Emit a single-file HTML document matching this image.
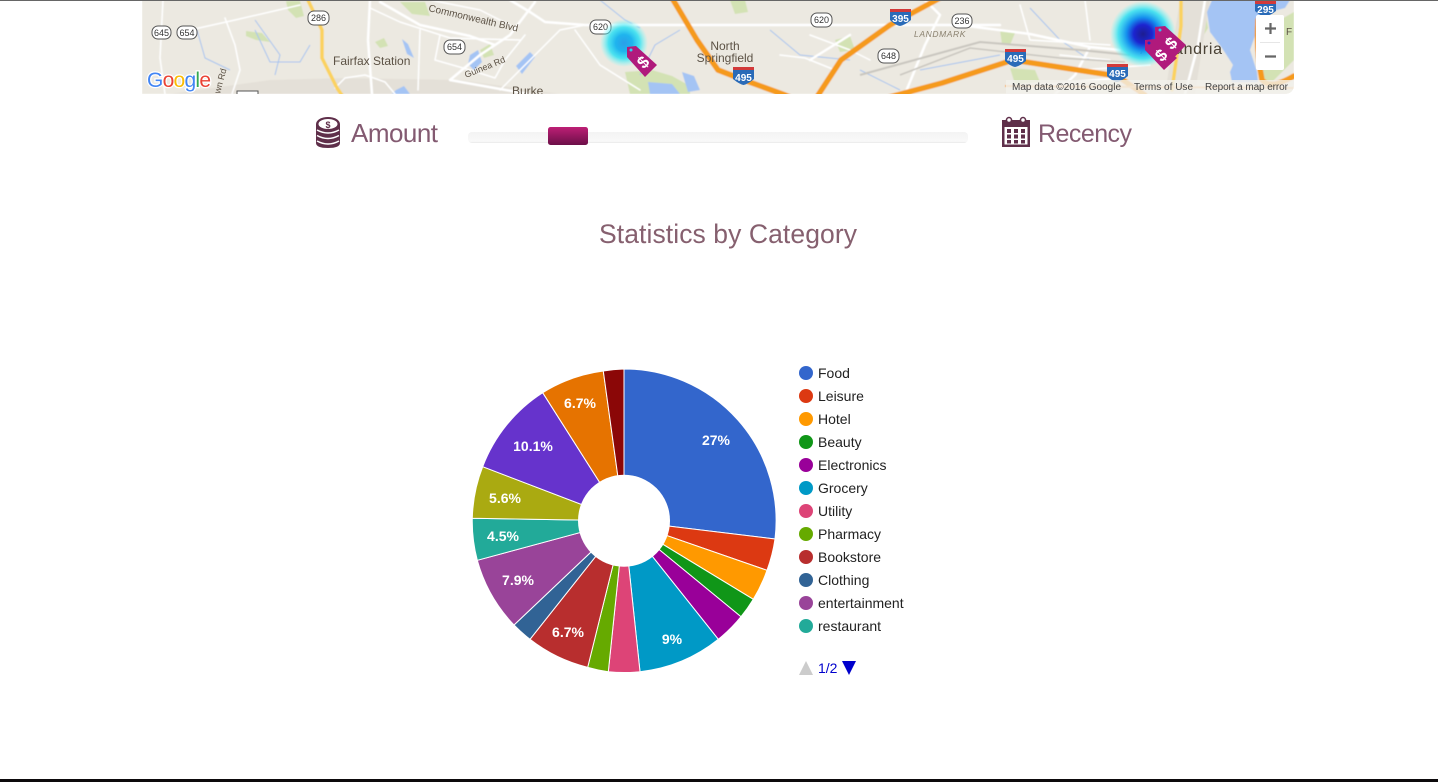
<!DOCTYPE html>
<html><head><meta charset="utf-8"><title>Statistics</title>
<style>
html,body{margin:0;padding:0;background:#fff;width:1438px;height:782px;overflow:hidden}
svg{display:block;font-family:"Liberation Sans",Arial,sans-serif}
.rd{fill:none;stroke:#fff;stroke-width:1.500;stroke-linecap:round;stroke-linejoin:round}
.rm{fill:none;stroke:#fff;stroke-width:2.500;stroke-linecap:round;stroke-linejoin:round}
.hw{fill:none;stroke:#f59a1e;stroke-width:5.500;stroke-linecap:round;stroke-linejoin:round}
.yw{fill:none;stroke:#fbd25e;stroke-width:3.500;stroke-linecap:round;stroke-linejoin:round}
.st{fill:none;stroke:#a5c3ef;stroke-width:1}
.gn{fill:#d3e2b4}
.wt{fill:#a4c4f4}
.sh{fill:#fff;stroke:#555;stroke-width:1}
.sht{font-size:9px;fill:#333;text-anchor:middle}
.bs{font-size:10px;fill:#fff;text-anchor:middle;font-weight:bold}
.lb{fill:#5c5245}
.pl{font-size:14px;font-weight:bold;fill:#fff;text-anchor:middle}
.lg{font-size:14px;fill:#222}
.hd{fill:#835a71}
</style></head><body>
<svg width="1438" height="782" viewBox="0 0 1438 782" xmlns="http://www.w3.org/2000/svg">
<defs>
<clipPath id="mp"><path d="M142 0H1294V84Q1294 94 1284 94H142Z"/></clipPath>
<filter id="sf" x="0" y="0" width="100%" height="100%"><feGaussianBlur stdDeviation="0.4"/></filter>
<radialGradient id="h1"><stop offset="0" stop-color="#2a9fe8"/><stop offset=".35" stop-color="#1fb4ee"/><stop offset=".65" stop-color="#2fe0f2" stop-opacity=".85"/><stop offset="1" stop-color="#6ff" stop-opacity="0"/></radialGradient>
<radialGradient id="h2"><stop offset="0" stop-color="#1d1d90"/><stop offset=".28" stop-color="#1c24d0"/><stop offset=".5" stop-color="#1590ee"/><stop offset=".75" stop-color="#2fe0f2" stop-opacity=".85"/><stop offset="1" stop-color="#6ff" stop-opacity="0"/></radialGradient>
<linearGradient id="hd" x1="0" y1="0" x2="0" y2="1"><stop offset="0" stop-color="#bd1f75"/><stop offset="1" stop-color="#6c0f48"/></linearGradient>
<linearGradient id="tr" x1="0" y1="0" x2="0" y2="1"><stop offset="0" stop-color="#f3f3f3"/><stop offset=".85" stop-color="#f9f9f9"/><stop offset="1" stop-color="#e8e8e8"/></linearGradient>
</defs>
<rect width="1438" height="782" fill="#fff"/>
<g clip-path="url(#mp)">
<g filter="url(#sf)">
<rect x="142" y="0" width="1152" height="94" fill="#ece9e1"/>
<path class="gn" d="M286 1H300L304 16L296 18L288 10Z M246 31L262 33L270 42L256 40L246 36Z M375 42L384 38L388 46L380 48Z M400 2H425L430 16L412 14Z M652 70L672 76L690 86L690 94H630L625 72Z M730 0H745L748 12L735 14Z M480 50L490 44L494 55L484 58Z M835 40L850 36L855 50L840 52Z M1000 30L1015 33L1010 45L1002 44Z M1010 68L1035 70L1040 82L1015 84Z M1190 15L1205 8L1208 28L1198 45Z M1262 30L1294 12V60L1272 82H1262Z"/>
<path d="M170 94L270 80L345 78L460 80L560 94Z" fill="#e4e0d8"/>
<path d="M1180 0H1210L1205 30L1195 94H1165Z" fill="#e4e0d8"/>
<path class="wt" d="M1212 0H1290L1285 8L1262 14L1257 30L1250 50L1257 72L1258 82L1232 82L1230 72L1233 65L1222 48L1210 32L1207 12Z"/>
<path class="wt" d="M402 39L408 44L414 58L407 54Z M470 55L478 50L482 62L474 70L468 64Z M530 52L535 57L522 74L516 66Z M396 90L404 86L410 94H392Z M648 82L672 84L680 94H650Z M682 72L694 76L700 90L688 92Z"/>
<path class="st" d="M255 20L280 55L275 75M197 30L205 58L230 70M255 30L270 62L300 62L310 45M600 0L625 20L640 28M680 30L655 45L640 75M770 30L800 55L850 60M1030 8L1060 40L1090 60M860 70L900 90M920 70L1000 55"/>
<path class="rd" d="M163 0L160 58L165 94M190 30L235 20L300 5M225 18L235 45L240 70L232 94M335 88L345 78L365 75L385 82L395 94M370 8L400 22L450 38L520 40M420 30L418 90M440 35L435 60L470 70L495 78L505 60L525 35M510 25L480 10L430 0M500 90L560 30L585 25M575 30L600 65L640 90M1085 0L1090 40M1020 5L1030 40L1110 45M870 60L850 50L810 35M780 55L805 58L835 70M1060 55L1110 60M1080 70L1150 65"/>
<path class="rm" d="M585 25H1000M960 25L1030 34L1090 47L1120 50M370 0L368 40L372 94M380 2L420 25L470 36L495 45M510 0L530 12L545 22L585 25M535 2L510 35L480 55L450 80L528 94M925 0L940 15L925 45L905 94M1090 47L1075 75L1055 94M1205 0L1198 45L1185 94M850 35L810 60M1040 85L1120 78"/>
<path d="M860 75L980 42L1080 50L1130 55" fill="none" stroke="#c9c6bf" stroke-width="2"/>
<path d="M900 75L970 48L1060 58L1125 62" fill="none" stroke="#c9c6bf" stroke-width="1.500"/>
<path class="yw" d="M307 -2L322 30L322 58L337 88L348 104"/>
<path class="yw" d="M1181 0L1181 26L1172 90" stroke-width="4"/>
<path class="hw" d="M672 -2L697 40L718 70L744 80L785 95L811 106"/>
<path class="hw" d="M811 106L841 60L890 25L940 -2"/>
<path class="hw" d="M856 106L942 83L1013 60L1117 76L1145 95"/>
<path class="hw" d="M1258 20Q1256 50 1262 80Q1270 90 1294 76" stroke-width="3.500"/>
<path d="M1005 86L1294 88" fill="none" stroke="#f5b468" stroke-width="2"/>
</g>
<g class="lb">
<text x="333" y="65" font-size="12">Fairfax Station</text>
<text x="428" y="11" font-size="10" transform="rotate(13 428 11)">Commonwealth Blvd</text>
<text x="466" y="78" font-size="9" transform="rotate(-22 466 78)">Guinea Rd</text>
<text x="220" y="94" font-size="9" transform="rotate(-75 220 94)">wn Rd</text>
<text x="512" y="95" font-size="12">Burke</text>
<text x="725" y="50" font-size="12" text-anchor="middle">North</text>
<text x="725" y="62" font-size="12" text-anchor="middle">Springfield</text>
<text x="914" y="37" font-size="8.500" font-style="italic" letter-spacing=".6" fill="#8b8270">LANDMARK</text>
<text x="1140" y="54" font-size="16" fill="#4a4235" textLength="82">Alexandria</text>
<text x="1286" y="35" font-size="10">F</text>
</g>
<g><rect class="sh" x="152" y="26" width="19" height="13" rx="6"/><text class="sht" x="161.500" y="36">645</text>
<rect class="sh" x="177" y="26" width="20" height="13" rx="6"/><text class="sht" x="187" y="36">654</text>
<rect class="sh" x="308" y="11" width="21" height="14" rx="6"/><text class="sht" x="318.500" y="21">286</text>
<rect class="sh" x="444" y="40" width="21" height="14" rx="6"/><text class="sht" x="454.500" y="50">654</text>
<rect class="sh" x="590" y="20" width="21" height="14" rx="6"/><text class="sht" x="600.500" y="30">620</text>
<rect class="sh" x="811" y="13" width="21" height="14" rx="6"/><text class="sht" x="821.500" y="23">620</text>
<rect class="sh" x="952" y="14" width="20" height="14" rx="6"/><text class="sht" x="962" y="24">236</text>
<rect class="sh" x="878" y="49" width="21" height="14" rx="6"/><text class="sht" x="888.500" y="59">648</text></g>
<g>
<path d="M890 10H911V20Q905 25 900 26Q895 25 890 20Z" fill="#2a6bb8"/><rect x="890" y="9" width="21" height="3" fill="#d23a3a"/><text class="bs" x="900.500" y="22">395</text>
<path d="M733 69H754V79Q748 84 743.500 85Q739 84 733 79Z" fill="#2a6bb8"/><rect x="733" y="67" width="21" height="3" fill="#d23a3a"/><text class="bs" x="743.500" y="81">495</text>
<path d="M1005 51H1026V61Q1020 66 1015 67Q1010 66 1005 61Z" fill="#2a6bb8"/><rect x="1005" y="49" width="21" height="3" fill="#d23a3a"/><text class="bs" x="1015.500" y="62">495</text>
<path d="M1107 66H1128V76Q1122 81 1117 82Q1112 81 1107 76Z" fill="#2a6bb8"/><rect x="1107" y="64" width="21" height="3" fill="#d23a3a"/><text class="bs" x="1117.500" y="77">495</text>
<path d="M1255 3H1276V11Q1270 16 1265 16Q1260 16 1255 11Z" fill="#2a6bb8"/><rect x="1255" y="1" width="21" height="3" fill="#d23a3a"/><text class="bs" x="1265.500" y="13">295</text>
</g>
<circle cx="624" cy="43" r="24" fill="url(#h1)"/>
<circle cx="1143" cy="34" r="33" fill="url(#h2)"/>
<g fill="#b01a7c">
<path d="M627 47L636 46L657 65L645 77L627 57Z"/>
<path d="M1155 27L1165 26L1186 45L1166 66L1155 38Z"/>
<path d="M1145 40L1155 39L1177 58L1164 70L1145 50Z"/>
</g>
<circle cx="631" cy="50" r="1.500" fill="#2fd0ee"/><circle cx="1160" cy="30" r="1.500" fill="#2fc0ee"/><circle cx="1149" cy="43" r="1.500" fill="#1a2ad0"/>
<g font-size="17" font-weight="bold" fill="#fff" text-anchor="middle">
<text x="643" y="68" transform="rotate(-45 643 62)">$</text>
<text x="1171" y="49" transform="rotate(-45 1171 43)">$</text>
<text x="1161" y="61" transform="rotate(-45 1161 55)">$</text>
</g>
<text x="147" y="87" font-size="21" stroke="#fff" stroke-width="2.500" fill="#fff" paint-order="stroke" textLength="64">Google</text>
<text x="147" y="87" font-size="21" textLength="64"><tspan fill="#4285f4">G</tspan><tspan fill="#ea4335">o</tspan><tspan fill="#fbbc05">o</tspan><tspan fill="#4285f4">g</tspan><tspan fill="#34a853">l</tspan><tspan fill="#ea4335">e</tspan></text>
<rect x="237" y="91" width="21" height="5" fill="#fff" stroke="#555"/>
<rect x="1006" y="80" width="288" height="14" fill="#f3f1ec" fill-opacity=".8"/>
<g font-size="10" fill="#444">
<text x="1012" y="90" textLength="109">Map data ©2016 Google</text>
<text x="1134" y="90" textLength="59">Terms of Use</text>
<text x="1205" y="90" textLength="83">Report a map error</text>
</g>
<rect x="1256" y="15" width="28" height="55" rx="2" fill="#fff"/>
<rect x="1260" y="42" width="20" height="1" fill="#e6e6e6"/>
<path d="M1265 28.500H1276M1270.500 23V34M1265 56.500H1276" stroke="#666" stroke-width="2.200" fill="none"/>
</g>
<rect x="0" y="0" width="1438" height="1" fill="#666"/>
<rect x="0" y="779" width="1438" height="3" fill="#0d0a0c"/>
<!-- coin icon -->
<g fill="#5f2f4a">
<ellipse cx="328" cy="124" rx="12" ry="7"/>
<path d="M316 124V143Q316 148 328 148Q340 148 340 143V124Z"/>
</g>
<ellipse cx="328" cy="124" rx="9.500" ry="5" fill="#fff"/>
<text x="328" y="128" font-size="9" font-weight="bold" fill="#5f2f4a" text-anchor="middle">$</text>
<path d="M317 130Q328 136 339 130M317 135.500Q328 141.500 339 135.500M317 141Q328 147 339 141" fill="none" stroke="#fff" stroke-width="1.500"/>
<text class="hd" x="351" y="142" font-size="26" textLength="87">Amount</text>
<rect x="468" y="132" width="500" height="11" rx="4" fill="url(#tr)"/>
<rect x="548" y="127" width="40" height="18" rx="2.500" fill="url(#hd)"/>
<!-- calendar -->
<rect x="1002" y="120" width="28" height="27" fill="#5f2f4a"/>
<rect x="1004.500" y="127" width="23" height="17.500" fill="#fff"/>
<circle cx="1009" cy="120" r="2.500" fill="#fff" stroke="#5f2f4a" stroke-width="1.500"/>
<circle cx="1023" cy="120" r="2.500" fill="#fff" stroke="#5f2f4a" stroke-width="1.500"/>
<g fill="#5f2f4a">
<rect x="1007" y="129" width="4" height="4"/><rect x="1014" y="129" width="4" height="4"/><rect x="1021" y="129" width="4" height="4"/>
<rect x="1007" y="134.500" width="4" height="4"/><rect x="1014" y="134.500" width="4" height="4"/><rect x="1021" y="134.500" width="4" height="4"/>
<rect x="1007" y="140" width="4" height="3.500"/><rect x="1014" y="140" width="4" height="3.500"/><rect x="1021" y="140" width="4" height="3.500"/>
</g>
<text class="hd" x="1038" y="142" font-size="25" textLength="94">Recency</text>
<text x="599" y="243" font-size="26.500" fill="#86606f" textLength="258">Statistics by Category</text>
<!-- pie -->
<g stroke="#fff" stroke-width="1" stroke-linejoin="round">
<path fill="#3366cc" d="M624 520.700L624 369A151.700 151.700 0 0 1 775 539Z"/>
<path fill="#dc3912" d="M624 520.700L775 539A151.700 151.700 0 0 1 767 570.300Z"/>
<path fill="#ff9900" d="M624 520.700L767 570.300A151.700 151.700 0 0 1 753.300 599.300Z"/>
<path fill="#109618" d="M624 520.700L753.300 599.300A151.700 151.700 0 0 1 741 616.700Z"/>
<path fill="#990099" d="M624 520.700L741 616.700A151.700 151.700 0 0 1 718.300 639.300Z"/>
<path fill="#0099c6" d="M624 520.700L718.300 639.300A151.700 151.700 0 0 1 640 671.700Z"/>
<path fill="#dd4477" d="M624 520.700L640 671.700A151.700 151.700 0 0 1 608.300 671.700Z"/>
<path fill="#66aa00" d="M624 520.700L608.300 671.700A151.700 151.700 0 0 1 587.700 667.300Z"/>
<path fill="#b82e2e" d="M624 520.700L587.700 667.300A151.700 151.700 0 0 1 530 639.300Z"/>
<path fill="#316395" d="M624 520.700L530 639.300A151.700 151.700 0 0 1 514 625Z"/>
<path fill="#994499" d="M624 520.700L514 625A151.700 151.700 0 0 1 477.300 560.300Z"/>
<path fill="#22aa99" d="M624 520.700L477.300 560.300A151.700 151.700 0 0 1 472.300 518.300Z"/>
<path fill="#aaaa11" d="M624 520.700L472.300 518.300A151.700 151.700 0 0 1 482.700 466.700Z"/>
<path fill="#6633cc" d="M624 520.700L482.700 466.700A151.700 151.700 0 0 1 542.700 392.700Z"/>
<path fill="#e67300" d="M624 520.700L542.700 392.700A151.700 151.700 0 0 1 603.300 371Z"/>
<path fill="#8b0707" d="M624 520.700L603.300 371A151.700 151.700 0 0 1 624 369Z"/>
</g>
<circle cx="624" cy="520.700" r="46" fill="#fff"/>
<text class="pl" x="716" y="445">27%</text>
<text class="pl" x="533" y="451">10.1%</text>
<text class="pl" x="580" y="408">6.7%</text>
<text class="pl" x="505" y="503">5.6%</text>
<text class="pl" x="503" y="541">4.5%</text>
<text class="pl" x="518" y="585">7.9%</text>
<text class="pl" x="568" y="637">6.7%</text>
<text class="pl" x="672" y="644">9%</text>
<circle cx="806" cy="373" r="7" fill="#3366cc"/><text class="lg" x="818" y="378">Food</text>
<circle cx="806" cy="396" r="7" fill="#dc3912"/><text class="lg" x="818" y="401">Leisure</text>
<circle cx="806" cy="419" r="7" fill="#ff9900"/><text class="lg" x="818" y="424">Hotel</text>
<circle cx="806" cy="442" r="7" fill="#109618"/><text class="lg" x="818" y="447">Beauty</text>
<circle cx="806" cy="465" r="7" fill="#990099"/><text class="lg" x="818" y="470">Electronics</text>
<circle cx="806" cy="488" r="7" fill="#0099c6"/><text class="lg" x="818" y="493">Grocery</text>
<circle cx="806" cy="511" r="7" fill="#dd4477"/><text class="lg" x="818" y="516">Utility</text>
<circle cx="806" cy="534" r="7" fill="#66aa00"/><text class="lg" x="818" y="539">Pharmacy</text>
<circle cx="806" cy="557" r="7" fill="#b82e2e"/><text class="lg" x="818" y="562">Bookstore</text>
<circle cx="806" cy="580" r="7" fill="#316395"/><text class="lg" x="818" y="585">Clothing</text>
<circle cx="806" cy="603" r="7" fill="#994499"/><text class="lg" x="818" y="608">entertainment</text>
<circle cx="806" cy="626" r="7" fill="#22aa99"/><text class="lg" x="818" y="631">restaurant</text>
<path d="M799 675H813L806 661Z" fill="#ccc"/>
<text x="818" y="673" font-size="14" fill="#0000cc">1/2</text>
<path d="M842 661H856L849 675Z" fill="#0000cc"/>
</svg>
</body></html>
